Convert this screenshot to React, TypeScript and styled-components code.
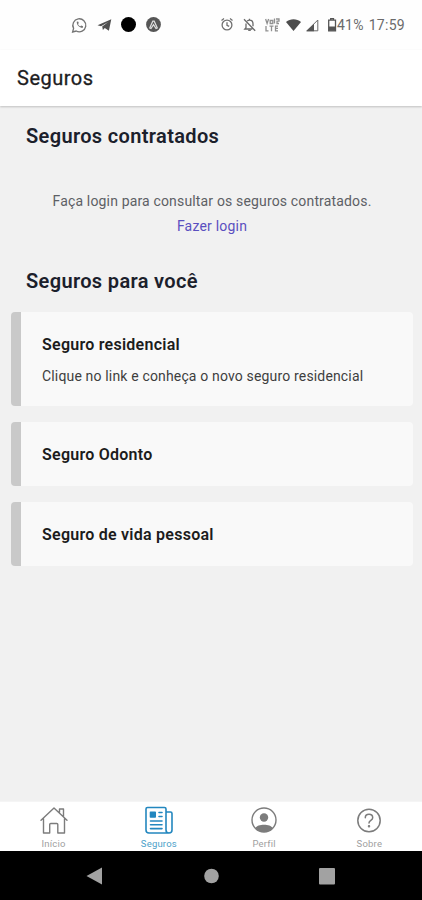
import React from "react";
import styled, { createGlobalStyle } from "styled-components";

const GlobalStyle = createGlobalStyle`
  * { box-sizing: border-box; }
  body { margin: 0; background: #f1f1f1; font-family: Roboto, "Liberation Sans", sans-serif; }
  h1, h2, h3, p { margin: 0; white-space: nowrap; }
  svg { display: block; flex: none; }
`;

const Screen = styled.div`
  display: flex;
  flex-direction: column;
  width: 422px;
  height: 900px;
  overflow: hidden;
  background: #f1f1f1;
`;

const StatusBar = styled.div`
  flex: none;
  height: 50px;
  padding: 0 17px 0 71px;
  display: flex;
  align-items: center;
  justify-content: space-between;
  background: #fefefe;
  color: #6a6a6a;
`;

const Notifications = styled.div`
  display: flex;
  align-items: center;
  gap: 8.5px;
`;

const SystemIcons = styled.div`
  display: flex;
  align-items: center;
`;

const IconSlot = styled.span<{ $gap: number }>`
  margin-right: ${(p) => p.$gap}px;
`;

const StatusText = styled.span<{ $spacing: number; $gap?: number }>`
  font-size: 14px;
  letter-spacing: ${(p) => p.$spacing}px;
  margin-right: ${(p) => p.$gap ?? 0}px;
  line-height: 20px;
  white-space: nowrap;
`;

const Header = styled.header`
  flex: none;
  height: 56px;
  padding-left: 17px;
  display: flex;
  align-items: center;
  background: #fff;
  box-shadow: 0 1px 2px rgba(0, 0, 0, 0.2);
`;

const HeaderTitle = styled.h1`
  font-size: 20px;
  font-weight: 400;
  line-height: 28px;
  letter-spacing: 0.5px;
  color: #1d1d1f;
  -webkit-text-stroke: 0.3px #1d1d1f;
`;

const Content = styled.main`
  flex: 1;
  padding: 16px 9px 0 11px;
`;

const SectionTitle = styled.h2`
  margin-left: 15px;
  font-size: 20px;
  font-weight: 600;
  line-height: 28px;
  letter-spacing: 0.35px;
  color: #1b202b;
`;

const LoginPrompt = styled.section`
  display: flex;
  flex-direction: column;
  align-items: center;
  margin: 39px 0 28px;
`;

const Message = styled.p`
  font-size: 14px;
  line-height: 25px;
  letter-spacing: 0.16px;
  color: #5d6065;
`;

const LoginLink = styled.a`
  font-size: 14px;
  line-height: 25px;
  letter-spacing: 0.2px;
  color: #5a4fc0;
`;

const CardList = styled.div`
  display: flex;
  flex-direction: column;
  gap: 16px;
  margin-top: 17px;
`;

const Card = styled.article<{ $height: number }>`
  height: ${(p) => p.$height}px;
  padding: 20px 20px 0 21px;
  border-left: 10px solid #c9c9c9;
  border-radius: 4px;
  background: #f9f9f9;
`;

const CardTitle = styled.h3`
  font-size: 16px;
  font-weight: 600;
  line-height: 26px;
  letter-spacing: 0.25px;
  color: #1c1c1c;
`;

const CardText = styled.p`
  margin-top: 5px;
  font-size: 14px;
  line-height: 26px;
  letter-spacing: 0.16px;
  color: #3e3e3e;
`;

const TabBar = styled.nav`
  flex: none;
  height: 50px;
  padding-left: 1px;
  display: grid;
  grid-template-columns: repeat(4, 1fr);
  border-top: 1px solid #f5f5f5;
  background: #fff;
`;

const Tab = styled.div<{ $active?: boolean }>`
  display: flex;
  flex-direction: column;
  align-items: center;
  padding-top: 4px;
  gap: 2px;
  color: ${(p) => (p.$active ? "#2387bf" : "#7c7c7c")};
`;

const TabLabel = styled.span<{ $active?: boolean }>`
  font-size: 9.5px;
  line-height: 14px;
  letter-spacing: 0.2px;
  color: ${(p) => (p.$active ? "#4b9fc9" : "#a0a0a0")};
`;

const SystemNav = styled.footer`
  flex: none;
  height: 49px;
  padding: 0 86px 0 85px;
  display: flex;
  align-items: center;
  justify-content: space-between;
  background: #000;
`;

const WhatsAppIcon = () => (
  <svg width="17" height="17" viewBox="0 0 17 17" fill="none" stroke="#747474" strokeWidth="1.3">
    <path d="M1.6 15l1-3.600A6.500 6.500 0 1 1 5.200 14z" />
    <path d="M5.700 4.800c.1 3.500 2.600 6 5.900 6.100l.5-1.600-1.800-.9-.9.9C8.200 8.700 7.500 8 7 6.900l.8-.8-.7-1.700z" fill="#747474" stroke="none" />
  </svg>
);

const TelegramIcon = () => (
  <svg width="16" height="16" viewBox="0 0 16 16">
    <path d="M.5 8.200L14.300 2.200L11.900 13.700L7.800 10.900L5.900 13L5.200 9.600L11.300 5L4 9.300z" fill="#505050" />
  </svg>
);

const DotIcon = () => (
  <svg width="16" height="16" viewBox="0 0 16 16">
    <circle cx="7.500" cy="7.500" r="7.500" fill="#000" />
  </svg>
);

const AppBadgeIcon = () => (
  <svg width="16" height="16" viewBox="0 0 16 16">
    <circle cx="7.500" cy="7.500" r="7.400" fill="#565656" />
    <path d="M3.700 11L6.800 4.200h1.400l3.100 6.800-1.300.6L7.500 7.700l-2.500 3.900z" fill="none" stroke="#ddd" strokeWidth="1.200" />
  </svg>
);

const AlarmIcon = () => (
  <svg width="13" height="14" viewBox="0 0 13 14" fill="none" stroke="#707070" strokeWidth="1.300">
    <circle cx="6" cy="7" r="4.900" />
    <path d="M.5 2.500L3 .6M11.500 2.500L9 .6M6 4.300v3l2.200 1.100" />
  </svg>
);

const MutedBellIcon = () => (
  <svg width="14" height="14" viewBox="0 0 14 14" fill="none" stroke="#6a6a6a" strokeWidth="1.300">
    <path d="M4.200 3.100C5 2.300 5.700 2.100 6.500 2.100c2.200 0 3.500 1.600 3.500 3.600v2.500M9.300 11H1.800L3 9.600V5.500M1 1.200l11.200 11.500M6.500 .8v1.300" />
    <path d="M5.200 12.300h2.600" />
  </svg>
);

const VoLteIcon = () => (
  <svg width="15" height="15" viewBox="0 0 15 15" fill="none" stroke="#909090" strokeWidth="1.300">
    <path d="M.6 1l1.500 4.500L3.600 1M5.200 2.500h2.600v3H5.200zM9.500 .5v5M11 1h3v2.200h-2v2.300h2M1 8v4.800h2.500M4.500 8.200h4M6.500 8.200v5M13 8.200h-2.500v4.600H13M10.500 10.300H13" />
  </svg>
);

const WifiIcon = () => (
  <svg width="16" height="13" viewBox="0 0 16 13">
    <path d="M0 3C4.400-.8 10.600-.8 15 3L7.500 12z" fill="#4c4c4c" />
  </svg>
);

const SignalIcon = () => (
  <svg width="13" height="13" viewBox="0 0 13 13">
    <path d="M1 11.800H11.800V1z" fill="none" stroke="#686868" />
    <path d="M0 12.300H8V4.800z" fill="#555" />
  </svg>
);

const BatteryIcon = () => (
  <svg width="9" height="14" viewBox="0 0 9 14">
    <path d="M.7 2.200h6.800v10.600H.7zM2.700 .7h2.800v1.500H2.700z" fill="none" stroke="#555" strokeWidth="1.300" />
    <path d="M.7 8.500h6.800v4.300H.7z" fill="#555" />
  </svg>
);

const HomeIcon = () => (
  <svg width="28" height="29" viewBox="0 0 28 29" fill="none" stroke="currentColor" strokeWidth="1.400" strokeLinejoin="round" strokeLinecap="round">
    <path d="M1 14.300L14 2l13 12.300M3.500 12.500v14.500h6.200V18.500q0-1 1-1h6.100q1 0 1 1V27H24.500V12.500M19.500 6.500V3h4v7.500" />
  </svg>
);

const NewsIcon = () => (
  <svg width="28" height="29" viewBox="0 0 28 29" fill="none" stroke="currentColor" strokeWidth="1.600" strokeLinejoin="round" strokeLinecap="round">
    <path d="M21 24V3q0-1.500-1.500-1.500h-17Q1 1.500 1 3v21q0 3 3 3h20q3 0 3-3V7.500Q27 6 25.500 6H21v18q0 3 3 3" />
    <rect x="5.500" y="6.300" width="4.700" height="4.700" fill="currentColor" />
    <path d="M14 6.500h3M14 10.500h3M5.500 15h11.500M5.500 18.800h11.500M5.500 22.600h11.500" />
  </svg>
);

const ProfileIcon = () => (
  <svg width="28" height="29" viewBox="0 0 28 29">
    <circle cx="14" cy="14" r="12" fill="none" stroke="currentColor" strokeWidth="1.400" />
    <circle cx="14" cy="11.500" r="4.200" fill="currentColor" />
    <path d="M5.300 22.200C7.500 17.700 20.500 17.700 22.700 22.200C18 27.300 10 27.300 5.300 22.200z" fill="currentColor" />
  </svg>
);

const HelpIcon = () => (
  <svg width="28" height="29" viewBox="0 0 28 29" fill="none" stroke="currentColor" strokeWidth="1.500" strokeLinecap="round">
    <circle cx="14" cy="14.500" r="11.200" />
    <path d="M10.300 11.700c0-4.500 7.400-4.500 7.400 0 0 2.600-3.700 2.700-3.700 5.300" />
    <circle cx="14" cy="20.300" r=".5" fill="currentColor" />
  </svg>
);

const BackIcon = () => (
  <svg width="18" height="20" viewBox="0 0 18 20">
    <path d="M1.500 10L17 1.500V18.500z" fill="#a2a2a2" />
  </svg>
);

const HomeButtonIcon = () => (
  <svg width="16" height="16" viewBox="0 0 16 16">
    <circle cx="8.500" cy="8" r="7.300" fill="#a2a2a2" />
  </svg>
);

const RecentsIcon = () => (
  <svg width="17" height="18" viewBox="0 0 17 18">
    <rect x="0" y="1" width="16" height="16.500" rx="1" fill="#a2a2a2" />
  </svg>
);

const tabs = [
  { label: "Início", icon: <HomeIcon /> },
  { label: "Seguros", icon: <NewsIcon />, active: true },
  { label: "Perfil", icon: <ProfileIcon /> },
  { label: "Sobre", icon: <HelpIcon /> },
];

export default function App() {
  return (
    <Screen>
      <GlobalStyle />
      <StatusBar>
        <Notifications>
          <WhatsAppIcon />
          <TelegramIcon />
          <DotIcon />
          <AppBadgeIcon />
        </Notifications>
        <SystemIcons>
          <IconSlot $gap={9}><AlarmIcon /></IconSlot>
          <IconSlot $gap={8}><MutedBellIcon /></IconSlot>
          <IconSlot $gap={6}><VoLteIcon /></IconSlot>
          <IconSlot $gap={4}><WifiIcon /></IconSlot>
          <IconSlot $gap={9}><SignalIcon /></IconSlot>
          <IconSlot $gap={0}><BatteryIcon /></IconSlot>
          <StatusText $spacing={0.2} $gap={5}>41%</StatusText>
          <StatusText $spacing={0.3}>17:59</StatusText>
        </SystemIcons>
      </StatusBar>
      <Header>
        <HeaderTitle>Seguros</HeaderTitle>
      </Header>
      <Content>
        <SectionTitle>Seguros contratados</SectionTitle>
        <LoginPrompt>
          <Message>Faça login para consultar os seguros contratados.</Message>
          <LoginLink>Fazer login</LoginLink>
        </LoginPrompt>
        <SectionTitle>Seguros para você</SectionTitle>
        <CardList>
          <Card $height={94}>
            <CardTitle>Seguro residencial</CardTitle>
            <CardText>Clique no link e conheça o novo seguro residencial</CardText>
          </Card>
          <Card $height={64}>
            <CardTitle>Seguro Odonto</CardTitle>
          </Card>
          <Card $height={64}>
            <CardTitle>Seguro de vida pessoal</CardTitle>
          </Card>
        </CardList>
      </Content>
      <TabBar>
        {tabs.map((tab) => (
          <Tab key={tab.label} $active={tab.active}>
            {tab.icon}
            <TabLabel $active={tab.active}>{tab.label}</TabLabel>
          </Tab>
        ))}
      </TabBar>
      <SystemNav>
        <BackIcon />
        <HomeButtonIcon />
        <RecentsIcon />
      </SystemNav>
    </Screen>
  );
}
